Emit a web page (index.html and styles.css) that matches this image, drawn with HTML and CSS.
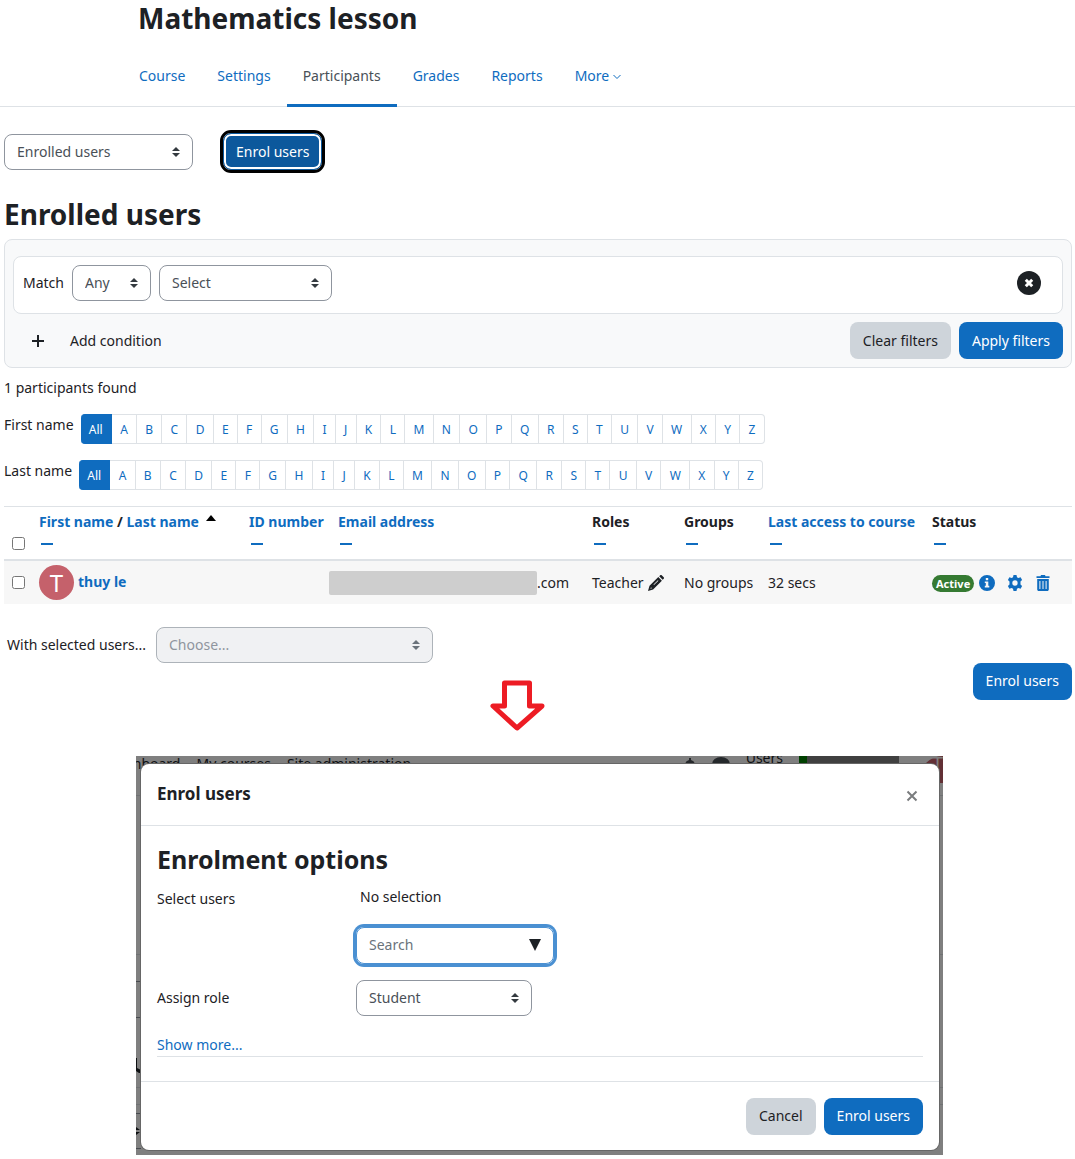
FILE: index.html
```html
<!DOCTYPE html>
<html lang="en">
  <head>
    <meta charset="UTF-8" />
    <meta name="viewport" content="width=device-width, initial-scale=1.0" />
    <title>Mathematics lesson: Participants</title>
    <link rel="stylesheet" href="styles.css">
  </head>

  <body>
    <header class="course-header">
      <h1>Mathematics lesson</h1>
      <nav class="tabs">
        <a href="#">Course</a>
        <a href="#">Settings</a>
        <a href="#" class="active">Participants</a>
        <a href="#">Grades</a>
        <a href="#">Reports</a>
        <a href="#">More <svg class="chevron" viewBox="0 0 8 6"><path d="M0.5 1l3.5 3.5L7.5 1" /></svg></a>
      </nav>
    </header>

    <main>
      <div class="toolbar">
        <select class="select select-page" aria-label="Participants page">
          <option>Enrolled users</option>
        </select>
        <button class="btn btn-primary btn-focus">Enrol users</button>
      </div>

      <h2>Enrolled users</h2>

      <section class="filters">
        <div class="filter-row">
          <label for="match">Match</label>
          <select class="select select-match" id="match">
            <option>Any</option>
          </select>
          <select class="select select-type" aria-label="Filter type">
            <option>Select</option>
          </select>
          <button class="filter-remove" aria-label="Remove filter">
            <svg viewBox="0 0 24 24"><circle cx="12" cy="12" r="12" /><path d="M8.8 8.8l6.4 6.4M15.2 8.8l-6.4 6.4" /></svg>
          </button>
        </div>
        <div class="filter-actions">
          <button class="add-condition">
            <svg viewBox="0 0 14 14"><path d="M7 1v12M1 7h12" /></svg>
            Add condition
          </button>
          <button class="btn btn-secondary">Clear filters</button>
          <button class="btn btn-primary">Apply filters</button>
        </div>
      </section>

      <p class="count">1 participants found</p>

      <div class="initials">
        <span>First name</span>
        <nav class="letters" aria-label="First name"></nav>
      </div>
      <div class="initials">
        <span>Last name</span>
        <nav class="letters" aria-label="Last name"></nav>
      </div>

      <table class="participants">
        <colgroup>
          <col class="col-check">
          <col class="col-name">
          <col class="col-id">
          <col class="col-email">
          <col class="col-roles">
          <col class="col-groups">
          <col class="col-access">
          <col class="col-status">
        </colgroup>
        <thead>
          <tr>
            <th class="check"><input type="checkbox" aria-label="Select all"></th>
            <th>
              <a href="#">First name</a> / <a href="#">Last name</a>
              <svg class="sort" viewBox="0 0 10 6"><path d="M0 6l5-6 5 6z" /></svg>
              <button class="collapse" aria-label="Hide name"></button>
            </th>
            <th><a href="#">ID number</a><button class="collapse" aria-label="Hide ID number"></button></th>
            <th><a href="#">Email address</a><button class="collapse" aria-label="Hide email"></button></th>
            <th>Roles<button class="collapse" aria-label="Hide roles"></button></th>
            <th>Groups<button class="collapse" aria-label="Hide groups"></button></th>
            <th><a href="#">Last access to course</a><button class="collapse" aria-label="Hide last access"></button></th>
            <th>Status<button class="collapse" aria-label="Hide status"></button></th>
          </tr>
        </thead>
        <tbody>
          <tr>
            <td class="check"><input type="checkbox" aria-label="Select thuy le"></td>
            <td class="name"><a href="#" class="user"><span class="avatar">T</span>thuy le</a></td>
            <td></td>
            <td><div class="email"><span class="redacted"></span>.com</div></td>
            <td>
              <div class="role">
                Teacher
                <svg viewBox="0 0 16 16"><path d="M11.2 1.2l1-.9c.5-.4 1.100-.4 1.500 0l2 2c.4.4.4 1 0 1.500l-1 1z" /><path fill-rule="evenodd" d="M10.300 2.100l3.600 3.600-8.800 8.700L0 16l1.500-5.200zM3 12.300l-.6 1.500 1.500-.6zM5.500 9.600l.5.500 4.400-4.400-.5-.5z" /></svg>
              </div>
            </td>
            <td>No groups</td>
            <td>32 secs</td>
            <td>
              <div class="status">
                <span class="badge">Active</span>
                <a href="#" aria-label="Enrolment details"><svg viewBox="0 0 16 16"><path fill-rule="evenodd" d="M8 0a8 8 0 1 1 0 16A8 8 0 0 1 8 0zM6.800 3v2.200h2.400V3zM5.800 6.500V8h1v2.800h-1v1.700h4.500v-1.700h-1V6.500z" /></svg></a>
                <a href="#" aria-label="Edit enrolment"><svg viewBox="0 0 16 16"><path fill-rule="evenodd" d="M6.500 0h3l.5 2.300 1.400.8 2.200-.8 1.500 2.700-1.600 1.600v2.800l1.600 1.600-1.500 2.700-2.200-.8-1.400.8L9.500 16h-3L6 13.700l-1.400-.8-2.200.8L.9 11l1.600-1.600V6.600L.9 5l1.500-2.700 2.200.8L6 2.300zM8 5.300a2.700 2.700 0 1 0 0 5.400 2.700 2.700 0 0 0 0-5.400z" /></svg></a>
                <a href="#" aria-label="Unenrol"><svg viewBox="0 0 16 16"><path fill-rule="evenodd" d="M1.500 1.200h4L6 0h4l.5 1.200h4v1.700h-13zM2.200 4h11.600v10.500c0 .8-.7 1.500-1.500 1.500H3.700c-.8 0-1.500-.7-1.500-1.500zM4.400 6v8h1V6zM7.500 6v8h1V6zM10.600 6v8h1V6z" /></svg></a>
              </div>
            </td>
          </tr>
        </tbody>
      </table>

      <div class="bulk">
        <label for="bulk-action">With selected users...</label>
        <select class="select select-bulk" id="bulk-action" disabled>
          <option>Choose...</option>
        </select>
      </div>
      <div class="bottom-actions">
        <button class="btn btn-primary">Enrol users</button>
      </div>
    </main>

    <svg class="arrow" viewBox="0 0 56 52"><path d="M15.500 3h25v23H53L28 48 4 26h11.500z" /></svg>

    <div class="backdrop">
      <!-- dimmed page, only its edges show round the dialog -->
      <div class="behind">
        <span>Dashboard</span>
        <span>My courses</span>
        <span>Site administration</span>
        <svg class="bell" viewBox="0 0 12 12"><path d="M5 2V0h2v2q4 1 5 7H0q1-6 5-7z" /></svg>
        <svg class="bubble" viewBox="0 0 18 12"><ellipse cx="9" cy="8" rx="9" ry="7" /></svg>
        <span class="behind-user">Users</span>
        <span class="meter"></span>
        <span class="behind-avatar">T</span>
      </div>
      <svg class="edge edge-left" viewBox="0 0 5 399">
        <path class="rule" d="M0 39.500h5M0 198.500h5M0 331.500h5M0 348.500h5" />
        <path class="box" d="M0 225.500h5M0 261.500h5M0 357.500h5M0 392.500h5" />
        <path d="M0 302h1v10l4 2v3H3l-3-2z" />
        <path d="M0 371l4 3H0zM0 376h4l-4 3z" />
      </svg>
      <svg class="edge edge-right" viewBox="0 0 5 399">
        <path class="rule" d="M0 39.500h5M0 198.500h5M0 331.500h5M0 348.500h5" />
      </svg>
      <div class="modal" role="dialog" aria-labelledby="modal-title">
        <div class="modal-header">
          <h5 id="modal-title">Enrol users</h5>
          <button class="close" aria-label="Close"><svg viewBox="0 0 12 12"><path d="M1.500 1.500l9 9M10.500 1.500l-9 9" /></svg></button>
        </div>
        <form class="modal-body">
          <h3>Enrolment options</h3>
          <div class="field field-users">
            <label for="user-search">Select users</label>
            <div>
              <p class="selection">No selection</p>
              <div class="search">
                <input type="text" id="user-search" placeholder="Search" autofocus>
                <svg viewBox="0 0 12 12"><path d="M0 0h12L6 12z" /></svg>
              </div>
            </div>
          </div>
          <div class="field field-role">
            <label for="role">Assign role</label>
            <select class="select select-role" id="role">
              <option>Student</option>
            </select>
          </div>
          <a href="#" class="more">Show more...</a>
        </form>
        <div class="modal-footer">
          <button class="btn btn-secondary">Cancel</button>
          <button class="btn btn-primary">Enrol users</button>
        </div>
      </div>
    </div>

    <script>
      const bars = document.querySelectorAll('.letters');
      const letters = ['All', ...'ABCDEFGHIJKLMNOPQRSTUVWXYZ'];

      for (const bar of bars) {
        for (const letter of letters) {
          const link = document.createElement('a');
          link.href = '#';
          link.textContent = letter;
          if (letter === 'All') {
            link.className = 'active';
          }
          bar.appendChild(link);
        }
      }
    </script>
  </body>
</html>
```

FILE: styles.css
```css
* {
  box-sizing: border-box;
}

body {
  margin: 0;
  font-family: "Noto Sans", "Open Sans", sans-serif;
  font-size: 14px;
  line-height: 22px;
  color: #1d2125;
  background-color: #fff;
}

a {
  color: #0f6cbf;
  text-decoration: none;
}

button,
input,
select {
  font: inherit;
  color: inherit;
}

button {
  cursor: pointer;
}

h1,
h2 {
  margin: 0;
  font-size: 28px;
  line-height: 36px;
}

/* course header */
.course-header {
  border-bottom: 1px solid #dee2e6;
}

.course-header h1 {
  padding-left: 138px;
}

.tabs {
  display: flex;
  margin-bottom: -1px;
  padding: 9px 0 0 123px;
}

.tabs a {
  padding: 20px 16px 17px;
  border-bottom: 3px solid transparent;
}

.tabs a.active {
  color: #495057;
  border-bottom-color: #0f6cbf;
}

.chevron {
  width: 8px;
  height: 6px;
  margin-bottom: 1px;
  fill: none;
  stroke: #0f6cbf;
}

main {
  padding: 0 3px 0 4px;
}

/* controls */
.select {
  height: 36px;
  padding: 0 12px;
  border: 1px solid #8f959e;
  border-radius: 8px;
  color: #495057;
  appearance: none;
  background: #fff url("data:image/svg+xml,%3csvg xmlns='http://www.w3.org/2000/svg' viewBox='0 0 4 5'%3e%3cpath fill='%23343a40' d='M2 0L0 2h4zm0 5L0 3h4z'/%3e%3c/svg%3e") no-repeat right 12px center / 8px 10px;
}

.select:disabled {
  color: #8f959e;
  opacity: 1;
  border-color: #adb3b9;
  background-color: #f0f1f3;
  background-image: url("data:image/svg+xml,%3csvg xmlns='http://www.w3.org/2000/svg' viewBox='0 0 4 5'%3e%3cpath fill='%236a737b' d='M2 0L0 2h4zm0 5L0 3h4z'/%3e%3c/svg%3e");
}

.select-page {
  width: 189px;
}

.select-match {
  width: 79px;
}

.select-type {
  width: 173px;
}

.select-bulk {
  width: 277px;
}

.select-role {
  width: 176px;
}

.btn {
  height: 37px;
  padding: 0 12px;
  border: 1px solid transparent;
  border-radius: 8px;
  white-space: nowrap;
}

.btn-primary {
  color: #fff;
  background-color: #0f6cbf;
}

.btn-secondary {
  background-color: #ced4da;
}

.btn-focus {
  background-color: #0c589c;
  border: 1px solid #0c589c;
  outline: 3px solid #000;
  box-shadow: inset 0 0 0 2px #fff;
}

.toolbar {
  display: flex;
  align-items: center;
  gap: 30px;
  padding: 26px 0;
}

/* filters */
.filters {
  margin-top: 7px;
  padding: 16px 8px 8px;
  border: 1px solid #dee2e6;
  border-radius: 8px;
  background-color: #f8f9fa;
}

.filter-row {
  display: flex;
  align-items: center;
  gap: 8px;
  padding: 8px 21px 12px 9px;
  border: 1px solid #dee2e6;
  border-radius: 8px;
  background-color: #fff;
}

.filter-remove {
  width: 24px;
  height: 24px;
  margin-left: auto;
  padding: 0;
  border: 0;
  background: none;
}

.filter-remove svg {
  display: block;
  fill: #1d2125;
}

.filter-remove path {
  stroke: #fff;
  stroke-width: 3;
}

.filter-actions {
  display: flex;
  align-items: center;
  gap: 8px;
  padding-top: 8px;
}

.add-condition {
  display: flex;
  align-items: center;
  gap: 25px;
  margin-right: auto;
  padding: 0 18px;
  border: 0;
  background: none;
}

.add-condition svg {
  width: 14px;
  height: 14px;
  stroke: #1d2125;
  stroke-width: 2;
}

.count {
  margin: 9px 0 15px;
}

/* initials bars */
.initials {
  display: flex;
  gap: 7px;
  height: 30px;
  margin-bottom: 16px;
}

.letters {
  display: flex;
  width: 684px;
  font-size: 12px;
  line-height: 29px;
}

.letters a {
  flex: 1 0 auto;
  padding: 0 8px;
  border: 1px solid #dee2e6;
  border-left: 0;
  text-align: center;
}

.letters a.active {
  color: #fff;
  background-color: #0f6cbf;
  border-color: #0f6cbf;
  border-radius: 4px 0 0 4px;
}

.letters a:last-child {
  border-radius: 0 4px 4px 0;
}

/* participants table */
.participants {
  width: 100%;
  table-layout: fixed;
  border-collapse: collapse;
  border-top: 1px solid #dee2e6;
}

.participants th {
  height: 53px;
  padding: 4px 0 0;
  text-align: left;
  vertical-align: top;
  white-space: nowrap;
  border-bottom: 2px solid #dee2e6;
}

.participants td {
  height: 44px;
  padding: 2px 0 0;
  background-color: #f7f7f7;
}

.participants .name {
  padding: 0;
}

.participants .check {
  padding: 0 0 0 8px;
}

.participants th.check {
  vertical-align: bottom;
}

.check input {
  display: block;
  width: 13px;
  height: 13px;
  margin: 0;
}

th.check input {
  margin-bottom: 9px;
}

.col-check {
  width: 35px;
}

.col-name {
  width: 210px;
}

.col-id {
  width: 89px;
}

.col-email {
  width: 254px;
}

.col-roles {
  width: 92px;
}

.col-groups {
  width: 84px;
}

.col-access {
  width: 164px;
}

.sort {
  width: 10px;
  height: 6px;
  margin: 0 0 6px 3px;
}

.collapse {
  display: block;
  width: 16px;
  height: 22px;
  padding: 0;
  border: 0;
  background: linear-gradient(#0f6cbf, #0f6cbf) no-repeat center / 12px 2px;
}

.user {
  display: flex;
  align-items: center;
  gap: 4px;
  font-weight: bold;
}

.avatar {
  width: 35px;
  height: 35px;
  border-radius: 50%;
  font-size: 24px;
  font-weight: normal;
  line-height: 35px;
  text-align: center;
  color: #fff;
  background-color: #c5616b;
}

.email {
  display: flex;
  align-items: center;
  margin-left: -9px;
}

.redacted {
  width: 208px;
  height: 24px;
  border-radius: 2px;
  background-color: #cecece;
}

.role {
  display: flex;
  align-items: center;
  gap: 4px;
}

.role svg {
  width: 16px;
  height: 16px;
  fill: #1d2125;
}

.status {
  display: flex;
  align-items: center;
  gap: 12px;
}

.badge {
  margin-right: -7px;
  padding: 0 4px;
  border-radius: 10px;
  font-size: 11px;
  font-weight: bold;
  line-height: 17px;
  color: #fff;
  background-color: #357a32;
}

.status svg {
  display: block;
  width: 16px;
  height: 16px;
  fill: #0f6cbf;
}

.bulk {
  display: flex;
  gap: 10px;
  align-items: center;
  padding: 23px 3px 0;
}

.bottom-actions {
  display: flex;
  justify-content: flex-end;
}

.arrow {
  display: block;
  width: 56px;
  height: 52px;
  margin: -20px 0 24px 489px;
  fill: none;
  stroke: #ed1c24;
  stroke-width: 5;
  stroke-linejoin: round;
}

/* enrolment dialog */
.backdrop {
  position: relative;
  width: 807px;
  max-width: 100%;
  margin-left: 136px;
  padding: 8px 4px 5px 5px;
  overflow: hidden;
  background-color: #7f7f7f;
}

.behind {
  position: absolute;
  top: 0;
  left: -28px;
  right: 0;
  display: flex;
  gap: 16px;
  height: 27px;
  line-height: 16px;
  white-space: nowrap;
  color: #0e1012;
}

.behind svg {
  flex: none;
  fill: #25282b;
}

.bell {
  width: 12px;
  height: 12px;
  margin: 2px 0 0 auto;
}

.bubble {
  width: 18px;
  height: 12px;
}

.behind-user {
  line-height: 4px;
}

.meter {
  width: 100px;
  height: 7px;
  margin-right: 4px;
  border-left: 8px solid #004000;
  background-color: #404040;
}

.behind-avatar {
  width: 24px;
  border-radius: 24px 0 0 0;
  font-size: 20px;
  text-align: right;
  color: #7f7f7f;
  background-color: #623035;
}

.edge {
  position: absolute;
  top: 0;
  width: 5px;
  height: 399px;
  fill: #0e1012;
}

.edge-left {
  left: 0;
}

.edge-right {
  right: 0;
}

.rule {
  stroke: #6f7173;
}

.box {
  stroke: #474a4f;
}

.modal {
  position: relative;
  border-radius: 8px;
  background-color: #fff;
  box-shadow: 0 0 0 1px #666;
}

.modal-header {
  display: flex;
  align-items: center;
  justify-content: space-between;
  height: 62px;
  padding: 0 21px 0 16px;
  border-bottom: 1px solid #dee2e6;
}

.modal-header h5 {
  margin: 0;
  font-size: 17px;
}

.close {
  padding: 4px 0 0;
  border: 0;
  background: none;
}

.close svg {
  display: block;
  width: 12px;
  height: 12px;
  stroke: #7a7c7e;
  stroke-width: 2;
}

.modal-body {
  padding: 16px 16px 24px;
}

.modal-body h3 {
  margin: 0;
  font-size: 25px;
  line-height: 34px;
}

.field {
  display: grid;
  grid-template-columns: 199px 1fr;
}

.field-users {
  padding-top: 10px;
}

.field-users label {
  padding-top: 2px;
}

.selection {
  margin: 0 4px;
}

.search {
  display: flex;
  align-items: center;
  width: 198px;
  height: 37px;
  margin-top: 19px;
  padding: 0 12px;
  border: 1px solid #4a90d2;
  border-radius: 8px;
  box-shadow: 0 0 0 3px #4a90d2;
}

.search input {
  flex: 1;
  width: 0;
  padding: 0;
  border: 0;
  outline: 0;
}

.search svg {
  width: 12px;
  height: 12px;
  fill: #1d2125;
}

.search input::placeholder {
  color: #6a737b;
}

.field-role {
  align-items: center;
  padding: 16px 0 18px;
}

.more {
  display: block;
  border-bottom: 1px solid #dee2e6;
}

.modal-footer {
  display: flex;
  justify-content: flex-end;
  gap: 8px;
  padding: 16px 16px 15px;
  border-top: 1px solid #dee2e6;
}
```
